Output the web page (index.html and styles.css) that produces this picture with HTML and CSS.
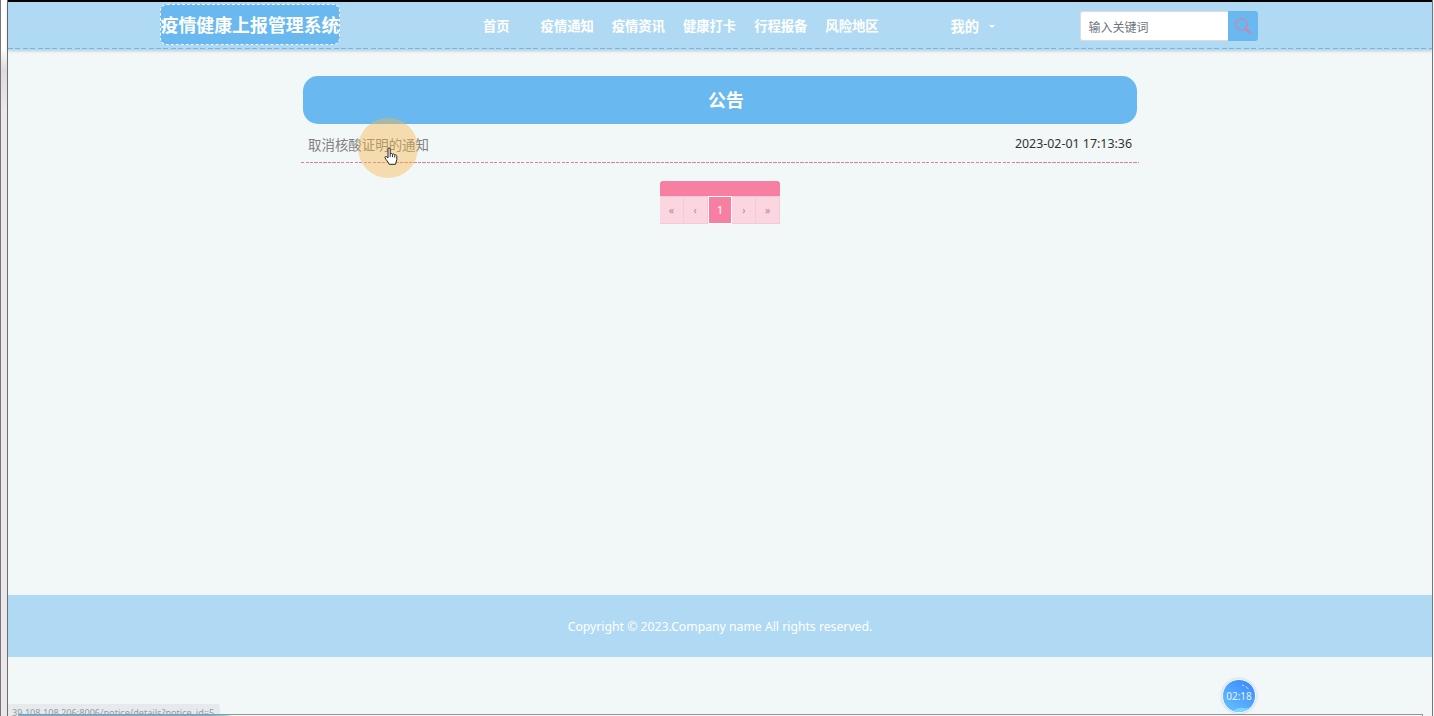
FILE: index.html
```html
<!DOCTYPE html>
<html lang="zh-CN">
<head>
    <meta charset="UTF-8">
    <meta name="viewport" content="width=device-width, initial-scale=1.0">
    <title>疫情健康上报管理系统</title>
    <link rel="stylesheet" href="styles.css">
</head>
<body>
    <div class="edge-left"></div>

    <div class="page">
        <header class="header">
            <a class="logo" href="#">疫情健康上报管理系统</a>
            <ul class="nav">
                <li class="home"><a href="#">首页</a></li>
                <li><a href="#">疫情通知</a></li>
                <li><a href="#">疫情资讯</a></li>
                <li><a href="#">健康打卡</a></li>
                <li><a href="#">行程报备</a></li>
                <li><a href="#">风险地区</a></li>
            </ul>
            <a class="my" href="#">我的<span class="caret"></span></a>
            <form class="search">
                <input type="text" placeholder="输入关键词">
                <button type="button">
                    <svg width="16" height="16" viewBox="0 0 16 16" fill="none" stroke="#e07ba6">
                        <circle cx="6.5" cy="6.5" r="5.7" stroke-width="1.1"/>
                        <path d="M10.8 10.8L14.8 14.8" stroke-width="2" stroke-linecap="round"/>
                    </svg>
                </button>
            </form>
        </header>

        <main class="main">
            <h1 class="title">公告</h1>
            <div class="notice">
                <a href="#">取消核酸证明的通知</a>
                <span class="date">2023-02-01 17:13:36</span>
            </div>
            <div class="pager">
                <span>«</span>
                <span>‹</span>
                <span class="active">1</span>
                <span>›</span>
                <span>»</span>
            </div>
        </main>

        <footer class="footer"><span>Copyright © 2023.Company name All rights reserved.</span></footer>
    </div>

    <div class="edge-right"></div>

    <!-- floating layer -->
    <div class="halo"></div>
    <svg class="hand" width="14" height="19" viewBox="0 0 14 19">
        <path d="M4 11V2.2C4 .4 6.2.4 6.2 2.2V7C6.8 6 8.4 6.3 8.5 7.4C9.2 6.6 10.6 7 10.7 8.1C11.6 7.6 12.8 8 12.8 9.3V12.5C12.8 14.5 11.5 15.3 11.5 17.3H5.2C4.8 15.2 1.7 13 1 10.6C.8 9.4 2.2 9.1 2.9 9.9Z" fill="#fff" stroke="#222" stroke-width="1"/>
        <path d="M6.2 7V10M8.5 7.6V10.2M10.7 8.3V10.6" stroke="#222" stroke-width=".9"/>
    </svg>
    <div class="status">39.108.108.206:8006/notice/details?notice_id=5</div>
    <div class="bottom-line"></div>
    <div class="timer">
        <svg width="32" height="32" viewBox="0 0 32 32" fill="none">
            <path d="M10 31Q15 27 20 28Q24 29 27 27Q22 32 16 32Q13 32 10 31Z" fill="#7fd6fb"/>
            <path d="M19 5L21 5.6M22.5 6.5L25.5 9" stroke="#b5dcff" stroke-width="1"/>
        </svg>
        <span>02:18</span>
    </div>
</body>
</html>
```
FILE: styles.css
```css
* {
    box-sizing: border-box;
}

body {
    margin: 0;
    height: 716px;
    display: flex;
    position: relative;
    overflow: hidden;
    background-color: #f2f7f8;
    font-family: "Noto Sans", "Noto Sans CJK SC", sans-serif;
    font-size: 13.3px;
}

a {
    text-decoration: none;
    color: inherit;
}

.edge-left {
    width: 8px;
    border-left: 1px solid #77777a;
    border-right: 1px solid #6d6d70;
    background: linear-gradient(#fff 0, #fff 48px, #dedadd 70px, #ece7ea 110px, #ece7ea);
}

.edge-right {
    width: 2px;
    border-left: 1px solid #77777a;
}

.page {
    flex: 1;
    display: flex;
    flex-direction: column;
}

.header {
    height: 50px;
    border-top: 2px solid #000;
    display: flex;
    align-items: flex-start;
    padding-left: 152px;
    color: #fff;
    font-weight: bold;
    background: repeating-linear-gradient(90deg, #69b8ef 0, #69b8ef 5px, #b0daf3 5px, #b0daf3 7.4px) 0 46px / 100% 1px no-repeat #b0daf3;
    box-shadow: 0 1px 3px rgba(0, 0, 0, 0.2);
}

.logo {
    width: 180px;
    height: 41px;
    margin-top: 2px;
    border: 1px dashed #fff;
    border-radius: 7px;
    background-color: #69b8ef;
    font-size: 17.9px;
    line-height: 41px;
    white-space: nowrap;
    display: flex;
    justify-content: center;
}

.nav {
    display: flex;
    gap: 18px;
    list-style: none;
    margin: 0 0 0 143px;
    padding: 0;
    line-height: 49px;
}

.home {
    margin-right: 13px;
}

.my {
    margin-left: 72px;
    width: 129px;
    line-height: 49px;
    font-size: 14.3px;
    display: flex;
    align-items: center;
}

.caret {
    margin-left: 10px;
    border: 3px solid transparent;
    border-top-color: #fff;
    border-bottom: 0;
}

.search {
    display: flex;
    margin-top: 9px;
}

.search input {
    width: 148px;
    height: 30px;
    padding: 2px 8px 0;
    border: 1px solid #ddd;
    border-right: 0;
    border-radius: 3px 0 0 3px;
    outline: none;
    font-family: inherit;
    font-size: 12px;
}

.search input::placeholder {
    color: #6c757d;
}

.search button {
    width: 30px;
    height: 30px;
    padding: 0;
    border: 0;
    border-radius: 0 3px 3px 0;
    background-color: #69b8ef;
    display: flex;
    align-items: center;
    justify-content: center;
}

.main {
    width: 838px;
    height: 545px;
    margin: 0 auto;
    padding-top: 26px;
}

.title {
    margin: 0 2px;
    height: 48px;
    padding-left: 12px;
    border-radius: 15px;
    background-color: #69b8ef;
    color: #fff;
    font-size: 17.9px;
    line-height: 49px;
    text-align: center;
}

.notice {
    height: 39px;
    padding: 0 7px;
    display: flex;
    justify-content: space-between;
    line-height: 40px;
    color: #333;
    background: repeating-linear-gradient(90deg, #dc7d9a 0, #dc7d9a 3px, transparent 3px, transparent 4.5px) 0 100% / 100% 1px no-repeat;
}

.notice a {
    color: #808080;
    font-size: 13.45px;
    line-height: 42px;
}

.date {
    font-size: 12.4px;
}

.pager {
    width: 120px;
    height: 43px;
    margin: 18px auto 0;
    padding-top: 15px;
    border-radius: 3px;
    background-color: #f77fa1;
    display: flex;
}

.pager span {
    flex: 1;
    height: 28px;
    border: 1px solid #f1cbd6;
    border-left-width: 0;
    background-color: #fbd6e1;
    color: #b98594;
    font-size: 10.5px;
    line-height: 26px;
    text-align: center;
}

.pager .active {
    border: 1px solid #fff;
    background-color: #f77fa1;
    color: #fff;
    font-size: 11.5px;
}

.footer {
    height: 62px;
    background-color: #b0daf3;
    color: #fff;
    font-size: 12.22px;
    line-height: 63px;
    text-align: center;
}

.halo {
    position: absolute;
    left: 358px;
    top: 118px;
    width: 60px;
    height: 60px;
    border-radius: 50%;
    background-color: rgba(249, 183, 75, 0.42);
}

.hand {
    position: absolute;
    left: 384px;
    top: 147px;
}

.status {
    position: absolute;
    left: 8px;
    top: 704px;
    width: 212px;
    height: 12px;
    padding-left: 4px;
    overflow: hidden;
    border-radius: 0 3px 0 0;
    background-color: #e6eaec;
    color: #969b9d;
    font-size: 9.15px;
    line-height: 17px;
    white-space: nowrap;
}

.bottom-line {
    position: absolute;
    left: 18px;
    top: 714px;
    width: 1405px;
    height: 2px;
    border-top: 1px solid #949698;
    border-right: 1px solid #949698;
    background: linear-gradient(90deg, #62b5e8 190px, #7fe0d8 208px, #f5f7f8 214px);
}

.timer {
    position: absolute;
    left: 1222px;
    top: 679px;
    width: 34px;
    height: 34px;
    border: 1px solid #e9f6ff;
    border-radius: 50%;
    background: linear-gradient(35deg, #66c5ff, #3b85fa);
    box-shadow: 0 0 3px rgba(80, 130, 160, 0.4);
    color: #e3f3ff;
    font-size: 10px;
    line-height: 32px;
    text-align: center;
}

.timer svg {
    position: absolute;
    left: 0;
    top: 0;
}

.timer span {
    position: relative;
}
```
